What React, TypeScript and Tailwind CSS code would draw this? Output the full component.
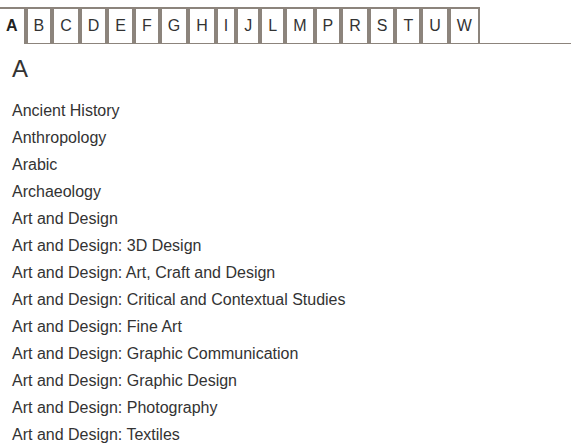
const letters = ["B", "C", "D", "E", "F", "G", "H", "I", "J", "L", "M", "P", "R", "S", "T", "U", "W"];

const subjects = [
  "Ancient History",
  "Anthropology",
  "Arabic",
  "Archaeology",
  "Art and Design",
  "Art and Design: 3D Design",
  "Art and Design: Art, Craft and Design",
  "Art and Design: Critical and Contextual Studies",
  "Art and Design: Fine Art",
  "Art and Design: Graphic Communication",
  "Art and Design: Graphic Design",
  "Art and Design: Photography",
  "Art and Design: Textiles",
];

export default function App() {
  return (
    <div className="min-h-screen bg-white font-['Liberation_Sans',Arial,sans-serif] text-[#333]">
      {/* letter tabs */}
      <ul className="flex pt-[7px] border-b border-[#8c847c]">
        <li className="-mb-px bg-white border-t-2 border-r-2 border-[#8c847c] px-1.5 h-[37px] leading-[34px] text-base font-bold text-[#222]">
          A
        </li>
        {letters.map((l) => (
          <li
            key={l}
            className="border-t-2 border-x-2 border-[#8c847c] px-1.5 h-9 leading-[34px] text-base"
          >
            <a href="#" className="text-[#333]">
              {l}
            </a>
          </li>
        ))}
      </ul>

      <div className="px-3">
        <h2 className="mt-[11px] text-2xl leading-7 font-normal">A</h2>
        <ul className="mt-[14px]">
          {subjects.map((s) => (
            <li key={s} className="text-base leading-[27px]">
              {s}
            </li>
          ))}
        </ul>
      </div>
    </div>
  );
}
